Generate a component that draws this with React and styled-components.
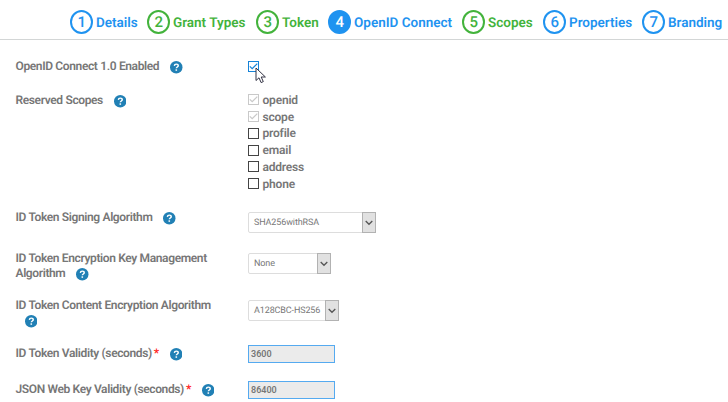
import React from "react";
import styled, { createGlobalStyle } from "styled-components";

const GlobalStyle = createGlobalStyle`
  * { box-sizing: border-box; }
  body { margin: 0; background: #fff; font-family: Roboto, sans-serif; overflow: hidden; text-rendering: geometricPrecision; }
`;

const Page = styled.main`
  width: 728px;
  height: 402px;
  overflow: hidden;
`;

const Steps = styled.nav`
  display: flex;
  height: 40px;
  padding: 10px 0 0 70.3px;
  border-bottom: 1px solid #d3d6d6;
`;

const Step = styled.div`
  display: flex;
  flex: none;
  align-items: flex-start;
  width: ${(p) => p.$width}px;
  color: ${(p) => (p.$green ? "#43b33c" : "#1f93f0")};
`;

const StepNumber = styled.span`
  display: flex;
  flex: none;
  align-items: center;
  justify-content: center;
  width: 23px;
  height: 24px;
  margin-right: 2.7px;
  border: 2px solid currentColor;
  border-radius: 50%;
  background: ${(p) => (p.$active ? "#1f93f0" : "transparent")};
  font-size: 15px;
  font-weight: 500;
  line-height: 20px;
  span { color: ${(p) => (p.$active ? "#fff" : "inherit")}; }
`;

const StepName = styled.span`
  font-size: 13.5px;
  font-weight: 600;
  line-height: 27px;
  white-space: nowrap;
`;

const Form = styled.form`
  padding: 19px 0 0 15.5px;
`;

const Row = styled.div`
  display: grid;
  grid-template-columns: 232.5px 1fr;
  height: ${(p) => p.$height}px;
`;

const Label = styled.div`
  color: #777;
  font-size: 12px;
  font-weight: 600;
  line-height: 15px;
  white-space: nowrap;
  letter-spacing: -0.38px;
  word-spacing: 0.1px;
`;

const Required = styled.span`
  margin-left: 2px;
  color: #f22;
`;

const HelpMark = styled.svg`
  display: inline-block;
  width: 12.5px;
  height: 12.5px;
  margin-left: ${(p) => p.$gap ?? 11}px;
  vertical-align: -3.5px;
`;

const Control = styled.div`
  margin-top: ${(p) => p.$top || 0}px;
`;

const CheckRow = styled.div`
  display: flex;
  align-items: center;
  gap: 3.5px;
  height: 16.75px;
  color: #777;
  font-size: 12px;
  font-weight: 600;
  line-height: 16px;
  letter-spacing: -0.2px;
`;

const CheckSvg = styled.svg`
  display: block;
  flex: none;
  width: 11px;
  height: 11px;
`;

const PointerTarget = styled.div`
  position: relative;
  width: 11px;
  height: 11px;
`;

const Pointer = styled.svg`
  position: absolute;
  left: 7px;
  top: 6px;
  width: 12px;
  height: 17px;
`;

const SelectBox = styled.div`
  display: flex;
  justify-content: space-between;
  width: ${(p) => p.$width}px;
  height: 21px;
  border: 1px solid #ddd;
  border-radius: 2px;
  color: #777;
  font-size: 9px;
  line-height: 21px;
  letter-spacing: -0.12px;
  padding-left: 5px;
  white-space: nowrap;
`;

const SelectButton = styled.span`
  display: flex;
  flex: none;
  align-items: center;
  justify-content: center;
  width: 14px;
  height: 21px;
  margin: -1px -1px 0 0;
  border: 1px solid #b2b2b2;
  background: #e1e1e1;
`;

const NumberInput = styled.input`
  display: block;
  width: 87px;
  height: 18px;
  margin: 0;
  padding: 0 0 0 2px;
  border: 1px solid #55aaf0;
  border-radius: 0;
  background: #ebebeb;
  color: #777;
  font: 600 9px/16px Roboto, sans-serif;
  outline: none;
`;

const steps = [
  { name: "Details", width: 77 },
  { name: "Grant Types", width: 109, green: true },
  { name: "Token", width: 72, green: true },
  { name: "OpenID Connect", width: 134, active: true },
  { name: "Scopes", width: 81, green: true },
  { name: "Properties", width: 99 },
  { name: "Branding", width: 90 },
];

const scopes = [
  { name: "openid", state: "locked" },
  { name: "scope", state: "locked" },
  { name: "profile" },
  { name: "email" },
  { name: "address" },
  { name: "phone" },
];

const boxColors = { locked: "#c9c9c9", focused: "#1583d8" };

function Checkbox({ state }) {
  return (
    <CheckSvg viewBox="0 0 11 11" fill="none" stroke={boxColors[state] || "#444"}>
      <rect x="0.5" y="0.5" width="10" height="10" />
      {state && <path d="M1.8 5.3 4.2 7.7 9.3 2.6" strokeWidth="1.2" />}
    </CheckSvg>
  );
}

function Help({ gap }) {
  return (
    <HelpMark $gap={gap} viewBox="0 0 12 12">
      <circle cx="6" cy="6" r="6" fill="#2180b5" />
      <path d="M4.2 4.7C4.3 3.5 5 3 6 3c1.1 0 1.9.6 1.9 1.5C7.9 5.7 6.1 5.8 6.1 7" fill="none" stroke="#fff" strokeWidth="1.4" />
      <rect x="5.3" y="8" width="1.5" height="1.4" fill="#fff" />
    </HelpMark>
  );
}

function Select({ value, width }) {
  return (
    <SelectBox $width={width}>
      {value}
      <SelectButton>
        <svg width="8" height="6" viewBox="0 0 8 6" fill="none" stroke="#555" strokeWidth="1.3">
          <path d="M0.7 1 4 4.3 7.3 1" />
        </svg>
      </SelectButton>
    </SelectBox>
  );
}

export default function App() {
  return (
    <Page>
      <GlobalStyle />
      <Steps>
        {steps.map((s, i) => (
          <Step key={s.name} $width={s.width} $green={s.green}>
            <StepNumber $active={s.active}><span>{i + 1}</span></StepNumber>
            <StepName>{s.name}</StepName>
          </Step>
        ))}
      </Steps>
      <Form>
        <Row $height={34}>
          <Label>OpenID Connect 1.0 Enabled<Help /></Label>
          <Control $top={2}>
            <PointerTarget>
              <Checkbox state="focused" />
              <Pointer viewBox="0 0 12 17">
                <path d="M1 1v12.5l3-2.7 2.1 4.8 2.2-1L6.2 10h4.2z" fill="#fff" stroke="#334" strokeWidth="1" />
              </Pointer>
            </PointerTarget>
          </Control>
        </Row>
        <Row $height={117}>
          <Label>Reserved Scopes<Help /></Label>
          <Control $top={-1.4}>
            {scopes.map((s) => (
              <CheckRow key={s.name}><Checkbox state={s.state} />{s.name}</CheckRow>
            ))}
          </Control>
        </Row>
        <Row $height={41}>
          <Label>ID Token Signing Algorithm<Help /></Label>
          <Control $top={2}><Select value="SHA256withRSA" width={128} /></Control>
        </Row>
        <Row $height={47}>
          <Label>ID Token Encryption Key Management<br />Algorithm<Help /></Label>
          <Control $top={2}><Select value="None" width={83} /></Control>
        </Row>
        <Row $height={48}>
          <Label>ID Token Content Encryption Algorithm<br /><Help gap={9} /></Label>
          <Control $top={2}><Select value="A128CBC-HS256" width={91} /></Control>
        </Row>
        <Row $height={36}>
          <Label>ID Token Validity (seconds)<Required>*</Required><Help /></Label>
          <Control $top={-1}><NumberInput defaultValue="3600" /></Control>
        </Row>
        <Row $height={20}>
          <Label>JSON Web Key Validity (seconds)<Required>*</Required><Help /></Label>
          <Control $top={-1}><NumberInput defaultValue="86400" /></Control>
        </Row>
      </Form>
    </Page>
  );
}
